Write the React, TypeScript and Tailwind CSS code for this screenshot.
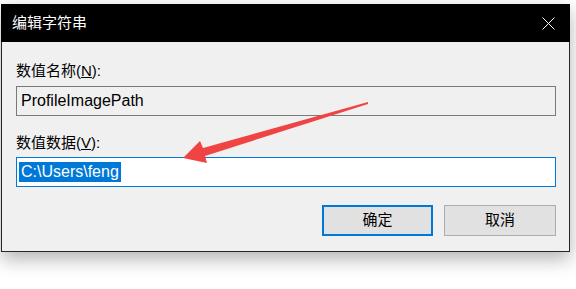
export default function App() {
  return (
    <div className="relative w-[576px] h-[289px] overflow-hidden bg-white font-['Liberation_Sans','Noto_Sans_CJK_SC',sans-serif] text-[15px] text-black">
      <div className="ml-[1px] mt-[4px] w-[569px] shadow-[0_7px_18px_rgba(0,0,0,0.3)]">
        <div className="flex h-[38px] items-center justify-between bg-black pl-[11px] pr-[15px]">
          <span className="text-white leading-[20px]">编辑字符串</span>
          <svg width="13" height="13" viewBox="0 0 13 13">
            <path d="M0.5 0.5L12.5 12.5M12.5 0.5L0.5 12.5" stroke="white" strokeWidth="1" fill="none" />
          </svg>
        </div>
        <div className="border-x border-b border-[#262626] bg-[#f0f0f0] pl-[14px] pr-[13px] pt-[19px] pb-[15px]">
          <div className="leading-[20px]">
            数值名称(<span className="underline">N</span>):
          </div>
          <div className="mt-[5px] flex h-[30px] items-center border border-[#7a7a7a] pl-[4px] text-[16px]">ProfileImagePath</div>
          <div className="mt-[17px] leading-[20px]">
            数值数据(<span className="underline">V</span>):
          </div>
          <div className="mt-[4px] flex h-[30px] items-center border border-[#0078d7] bg-white pl-[2px]">
            <span className="bg-[#0078d7] px-[2px] text-[16px] text-white leading-[20px]">{"C:\\Users\\feng"}</span>
          </div>
          <div className="mt-[18px] flex justify-end gap-[11px]">
            <button className="h-[31px] w-[111px] border-2 border-[#0078d7] bg-[#e1e1e1]">确定</button>
            <button className="h-[31px] w-[112px] border border-[#adadad] bg-[#e1e1e1]">取消</button>
          </div>
        </div>
      </div>
      <svg className="absolute left-0 top-0" width="576" height="289" viewBox="0 0 576 289">
        <polygon
          points="183,158 200,141 203,148 368,102 368,104 205,156 207,163"
          fill="#f04444"
        />
      </svg>
    </div>
  );
}
